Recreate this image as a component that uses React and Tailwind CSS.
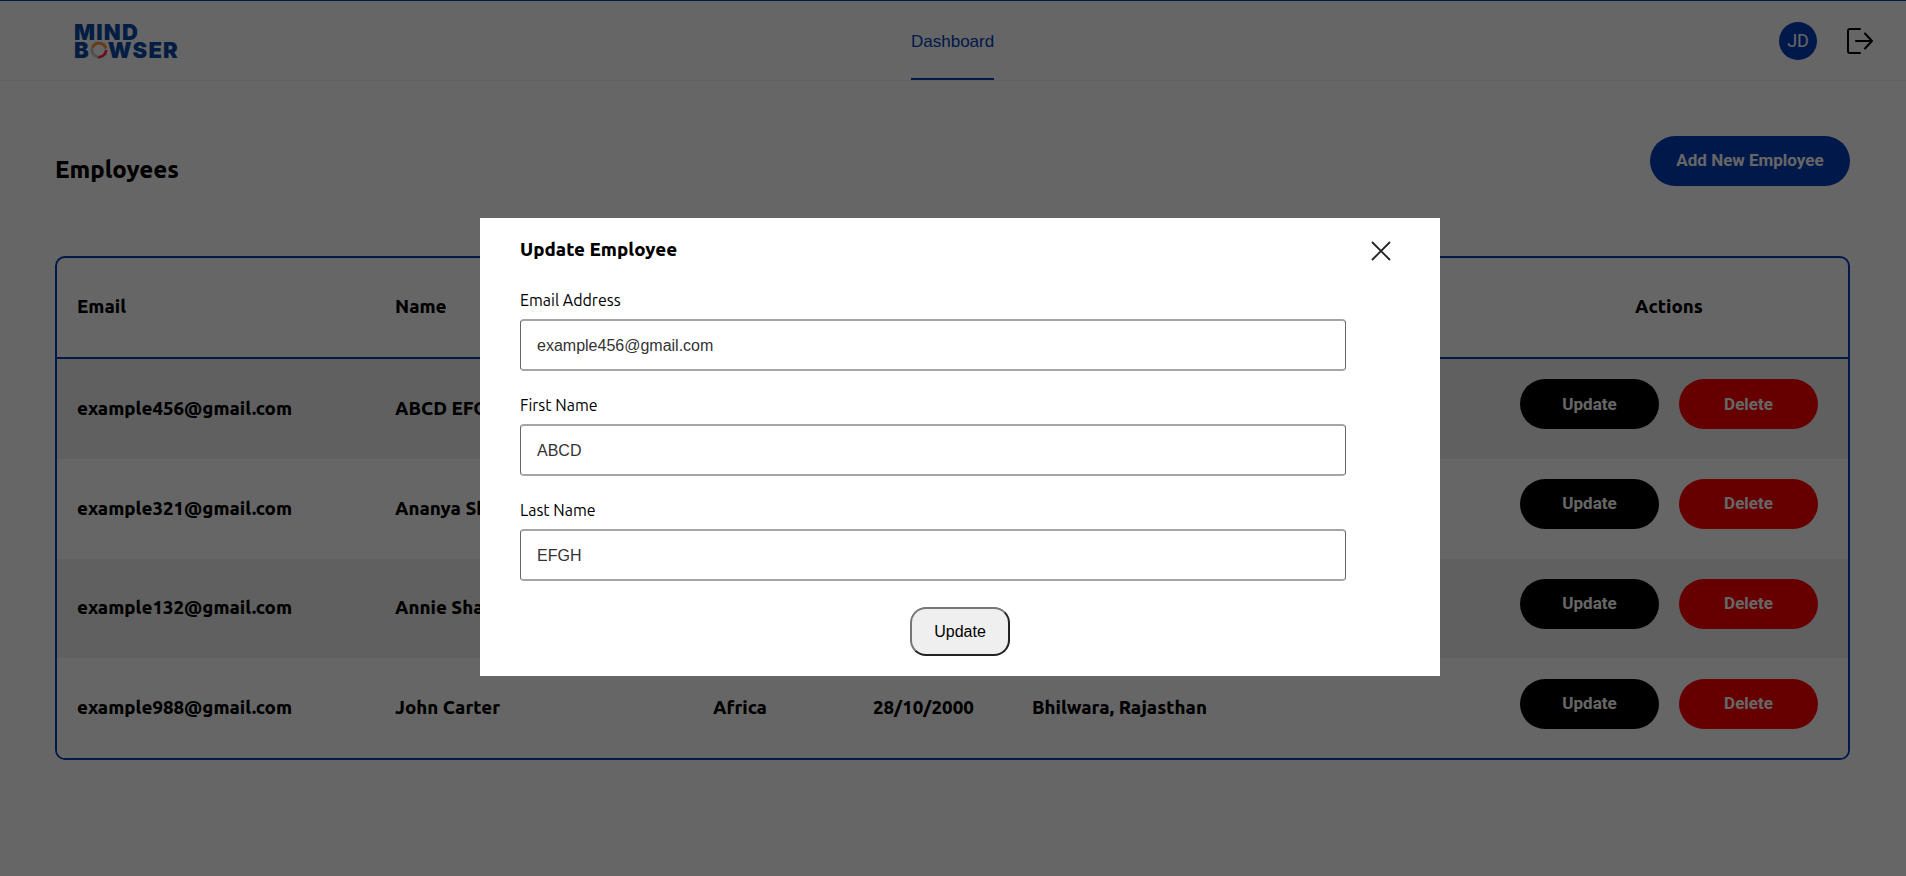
const UB = "font-['Ubuntu','Noto_Sans','Open_Sans',sans-serif]";

const rows = [
  { email: "example456@gmail.com", name: "ABCD EFGH", region: "Asia", dob: "12/05/1999", city: "Pune, Maharashtra", shade: true },
  { email: "example321@gmail.com", name: "Ananya Sharma", region: "Asia", dob: "11/02/1998", city: "Pune, Maharashtra", shade: false },
  { email: "example132@gmail.com", name: "Annie Sharma", region: "Asia", dob: "03/07/1997", city: "Pune, Maharashtra", shade: true },
  { email: "example988@gmail.com", name: "John Carter", region: "Africa", dob: "28/10/2000", city: "Bhilwara, Rajasthan", shade: false },
];

function Logo() {
  return (
    <div className="w-[105px] flex flex-col font-['Inter',sans-serif] font-black text-[#0a4aa8] text-[22px] leading-[18px] tracking-[1.2px] pt-[1px]">
      <span>MIND</span>
      <span className="flex items-center">
        B
        <svg viewBox="0 0 20 20" className="w-[18px] h-[18px]" fill="none">
          <path d="M2.6 7.5 A8 8 0 0 1 17.8 8.5" stroke="#ff9a40" strokeWidth="3.4" />
          <path d="M18 10 A8 8 0 0 1 9 17.9" stroke="#ff2a40" strokeWidth="3" />
          <path d="M9 17.9 A8 8 0 0 1 2.4 8" stroke="#c8c8c8" strokeWidth="3.4" />
        </svg>
        WSER
      </span>
    </div>
  );
}

function Field({ label, value }) {
  return (
    <div className="flex flex-col">
      <label className={`${UB} text-base leading-6 text-black mb-[7px]`}>{label}</label>
      <div className="w-[826px] h-[52px] rounded-[4px] border border-[#666] border-y-2 border-y-[#a3a6a9] flex items-center pl-4 pt-[1px] font-['Liberation_Sans',sans-serif] text-base text-[#333]">
        {value}
      </div>
    </div>
  );
}

export default function App() {
  return (
    <div className="relative w-full h-[876px] bg-white overflow-hidden">
      <header className="h-[81px] border-t border-t-[#003eb9] border-b border-b-[#f0f0f0] flex items-center pl-[74px] pr-[33px]">
        <Logo />
        <div className="ml-[732px] h-full flex items-stretch">
          <a className="flex items-center border-b-2 border-[#003eb9] pt-[5px] font-['Liberation_Sans',sans-serif] text-[17px] text-[#003eb9]">Dashboard</a>
        </div>
        <div className="ml-auto flex items-center gap-[30px]">
          <div className="w-[38px] h-[38px] rounded-full bg-[#003eb9] text-white flex items-center justify-center font-['Roboto',sans-serif] text-lg">JD</div>
          <svg viewBox="0 0 26 26" className="w-[26px] h-[26px]" fill="none" stroke="black" strokeWidth="2" strokeLinecap="round" strokeLinejoin="round">
            <path d="M13 1H3a2 2 0 0 0-2 2v20a2 2 0 0 0 2 2h10" />
            <path d="M9 13h16M18 5.5l7 7.5-7 7.5" />
          </svg>
        </div>
      </header>

      <main className="px-[55px]">
        <div className="flex items-start justify-between mt-[55px] h-[50px] w-[1795px]">
          <h1 className={`${UB} font-black text-2xl text-black mt-[18px]`}>Employees</h1>
          <button className="w-[200px] h-[50px] rounded-full bg-[#003eb9] text-white font-['Roboto',sans-serif] font-bold text-[17px]">Add New Employee</button>
        </div>

        <div className="mt-[70px] w-[1795px] border-2 border-[#003eb9] rounded-[10px] overflow-hidden">
          <div className={`${UB} font-black text-[18.72px] text-black flex items-center h-[101px] border-b-2 border-[#003eb9]`}>
            <div className="w-[338px] pl-[20px]">Email</div>
            <div className="w-[318px]">Name</div>
            <div className="w-[160px]">Region</div>
            <div className="w-[159px]">DOB</div>
            <div className="w-[400px]">Address</div>
            <div className="flex-1 text-center pl-[58px]">Actions</div>
          </div>
          {rows.map((r) => (
            <div key={r.email} className={`${UB} font-black text-[18.72px] text-black flex items-center h-[99.75px] ${r.shade ? "bg-[#f0f0f0]" : "bg-white"}`}>
              <div className="w-[338px] pl-[20px]">{r.email}</div>
              <div className="w-[318px]">{r.name}</div>
              <div className="w-[160px]">{r.region}</div>
              <div className="w-[159px]">{r.dob}</div>
              <div className="w-[400px]">{r.city}</div>
              <div className="flex-1 flex justify-end gap-5 pr-[30px] -mt-[9px]">
                <button className="w-[139px] h-[50px] rounded-full bg-black text-white font-['Roboto',sans-serif] font-bold text-[17px]">Update</button>
                <button className="w-[139px] h-[50px] rounded-full bg-[#ff0000] text-white font-['Roboto',sans-serif] font-bold text-[17px]">Delete</button>
              </div>
            </div>
          ))}
        </div>
      </main>

      <div className="fixed inset-0 bg-black/60 flex justify-center items-start pt-[218.4px] pl-[14px]">
        <div className="relative w-[960px] h-[458px] bg-white pl-[40px]">
          <h2 className={`${UB} font-black text-[18.72px] text-black mt-[18px] leading-7`}>Update Employee</h2>
          <button className="absolute left-[891px] top-[23px] text-black">
            <svg viewBox="0 0 20 20" className="w-5 h-5" fill="none" stroke="#222" strokeWidth="1.8"><path d="M1 1l18 18M19 1L1 19" /></svg>
          </button>
          <div className="mt-[24px] flex flex-col gap-[22px]">
            <Field label="Email Address" value="example456@gmail.com" />
            <Field label="First Name" value="ABCD" />
            <Field label="Last Name" value="EFGH" />
          </div>
          <div className="w-[880px] flex justify-center mt-[26px]">
            <button className="w-[100px] h-[49px] rounded-[16px] border-2 border-t-[#767676] border-l-[#767676] border-r-[#222] border-b-[#222] bg-[#efefef] font-['Liberation_Sans',sans-serif] text-base text-black">Update</button>
          </div>
        </div>
      </div>
    </div>
  );
}
